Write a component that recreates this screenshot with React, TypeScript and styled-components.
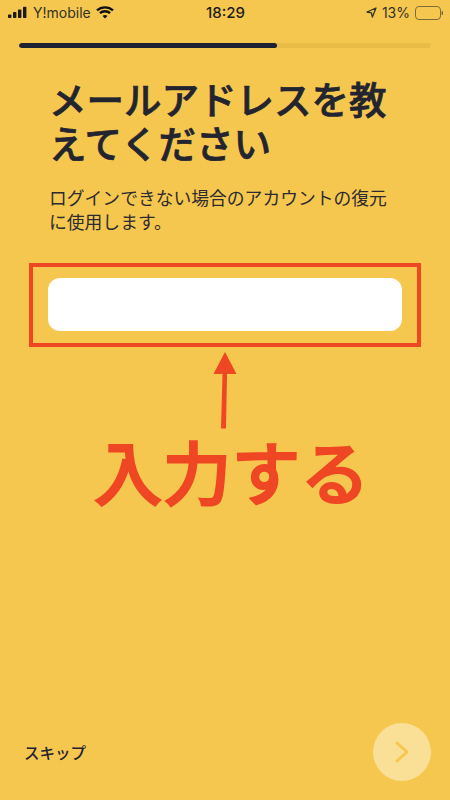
import styled, { createGlobalStyle } from "styled-components";

const GlobalStyle = createGlobalStyle`
  html, body {
    margin: 0;
    padding: 0;
    background: #f6c74f;
  }
  * {
    box-sizing: border-box;
  }
`;

const Page = styled.div`
  width: 450px;
  height: 800px;
  display: flex;
  flex-direction: column;
  overflow: hidden;
  background: #f6c74f;
  color: #1e2233;
  font-family: "Noto Sans CJK JP", "Liberation Sans", sans-serif;
`;

const StatusBar = styled.div`
  height: 25px;
  padding: 0 7px 0 8px;
  display: grid;
  grid-template-columns: 1fr auto 1fr;
  align-items: center;
  font-family: Inter, "Liberation Sans", sans-serif;
  font-size: 14px;
  color: #1c1c1c;
`;

const StatusLeft = styled.div`
  display: flex;
  align-items: center;
  gap: 5px;
`;

const Carrier = styled.span`
  color: #33322a;
`;

const Clock = styled.span`
  font-weight: 500;
  font-size: 15px;
`;

const StatusRight = styled.div`
  display: flex;
  align-items: center;
  justify-content: flex-end;
  gap: 5px;
  color: #33322a;
`;

const ProgressTrack = styled.div`
  margin: 18px 19px 0;
  height: 5px;
  border-radius: 3px;
  background: #e9bb47;
  overflow: hidden;
`;

const ProgressFill = styled.div`
  width: 62.5%;
  height: 100%;
  border-radius: 3px;
  background: #1e2233;
`;

const Title = styled.h1`
  margin: 28px 51px 0 49px;
  font-size: 37.5px;
  line-height: 44px;
  font-weight: 500;
  color: #22242f;
  -webkit-text-stroke: 0.7px #22242f;
`;

const Description = styled.p`
  margin: 21px 52px 0 49px;
  font-size: 17.8px;
  line-height: 24px;
  font-weight: 400;
  color: #2b2b30;
`;

const Highlight = styled.div`
  margin: 30px 29px 0;
  height: 84px;
  border: 4px solid #ef4623;
  padding: 11px 15px;
`;

const EmailInput = styled.input`
  display: block;
  width: 100%;
  height: 53px;
  border: 0;
  border-radius: 12px;
  background: #ffffff;
  outline: none;
`;

const ArrowWrap = styled.div`
  height: 78px;
  margin-top: 5px;
  display: flex;
  justify-content: center;
`;

const Callout = styled.div`
  padding-left: 13px;
  text-align: center;
  font-size: 69px;
  line-height: 80px;
  font-weight: 500;
  color: #ef4623;
  -webkit-text-stroke: 1.8px #ef4623;
`;

const Footer = styled.div`
  margin-top: auto;
  padding: 0 19px 19px 24px;
  display: flex;
  align-items: center;
  justify-content: space-between;
`;

const SkipLabel = styled.span`
  font-size: 15.5px;
  font-weight: 500;
  color: #1e2233;
`;

const NextButton = styled.button`
  width: 58px;
  height: 58px;
  padding: 0;
  border: 0;
  border-radius: 50%;
  background: #fae096;
  display: flex;
  align-items: center;
  justify-content: center;
`;

export default function App() {
  return (
    <Page>
      <GlobalStyle />
      <StatusBar>
        <StatusLeft>
          <svg width="20" height="13" viewBox="0 0 20 13" fill="#1c1c1c">
            <rect x="0" y="8.6" width="3.4" height="3.4" rx="0.7" />
            <rect x="5" y="6" width="3.4" height="6" rx="0.7" />
            <rect x="10" y="3.4" width="3.4" height="8.6" rx="0.7" />
            <rect x="15" y="0.8" width="3.4" height="11.2" rx="0.7" />
          </svg>
          <Carrier>Y!mobile</Carrier>
          <svg width="18" height="13" viewBox="0 0 18 13" fill="none" stroke="#111111" strokeWidth="2.3">
            <path d="M1 4.4C5.4 0.3 12.6 0.3 17 4.4" />
            <path d="M3.9 7.2C6.7 4.6 11.3 4.6 14.1 7.2" />
            <path d="M9 12.6L6.6 9.9C8 8.7 10 8.7 11.4 9.9Z" fill="#111111" stroke="none" />
          </svg>
        </StatusLeft>
        <Clock>18:29</Clock>
        <StatusRight>
          <svg width="11" height="11" viewBox="0 0 11 11" fill="none" stroke="#33322a" strokeWidth="1.3">
            <path d="M10 1L1 5L5.4 5.8L6.4 10Z" strokeLinejoin="round" />
          </svg>
          <span>13%</span>
          <svg width="28" height="14" viewBox="0 0 28 14" fill="none">
            <rect x="0.5" y="0.5" width="25" height="13" rx="3.5" stroke="#7a6c3a" />
            <rect x="26.6" y="5" width="1.4" height="4" rx="0.7" fill="#7a6c3a" />
          </svg>
        </StatusRight>
      </StatusBar>

      <ProgressTrack>
        <ProgressFill />
      </ProgressTrack>

      <Title>メールアドレスを教えてください</Title>
      <Description>ログインできない場合のアカウントの復元に使用します。</Description>

      <Highlight>
        <EmailInput type="email" />
      </Highlight>

      <ArrowWrap>
        <svg width="24" height="78" viewBox="0 0 24 78">
          <path d="M12 0L23.500 22H14L13 76.500H8L9.500 22H0.500Z" fill="#ef4623" />
        </svg>
      </ArrowWrap>

      <Callout>入力する</Callout>

      <Footer>
        <SkipLabel>スキップ</SkipLabel>
        <NextButton aria-label="次へ">
          <svg width="14" height="22" viewBox="0 0 14 22" fill="none" stroke="#f6c74f" strokeWidth="3" strokeLinecap="round" strokeLinejoin="round">
            <path d="M2 2L12 11L2 20" />
          </svg>
        </NextButton>
      </Footer>
    </Page>
  );
}
